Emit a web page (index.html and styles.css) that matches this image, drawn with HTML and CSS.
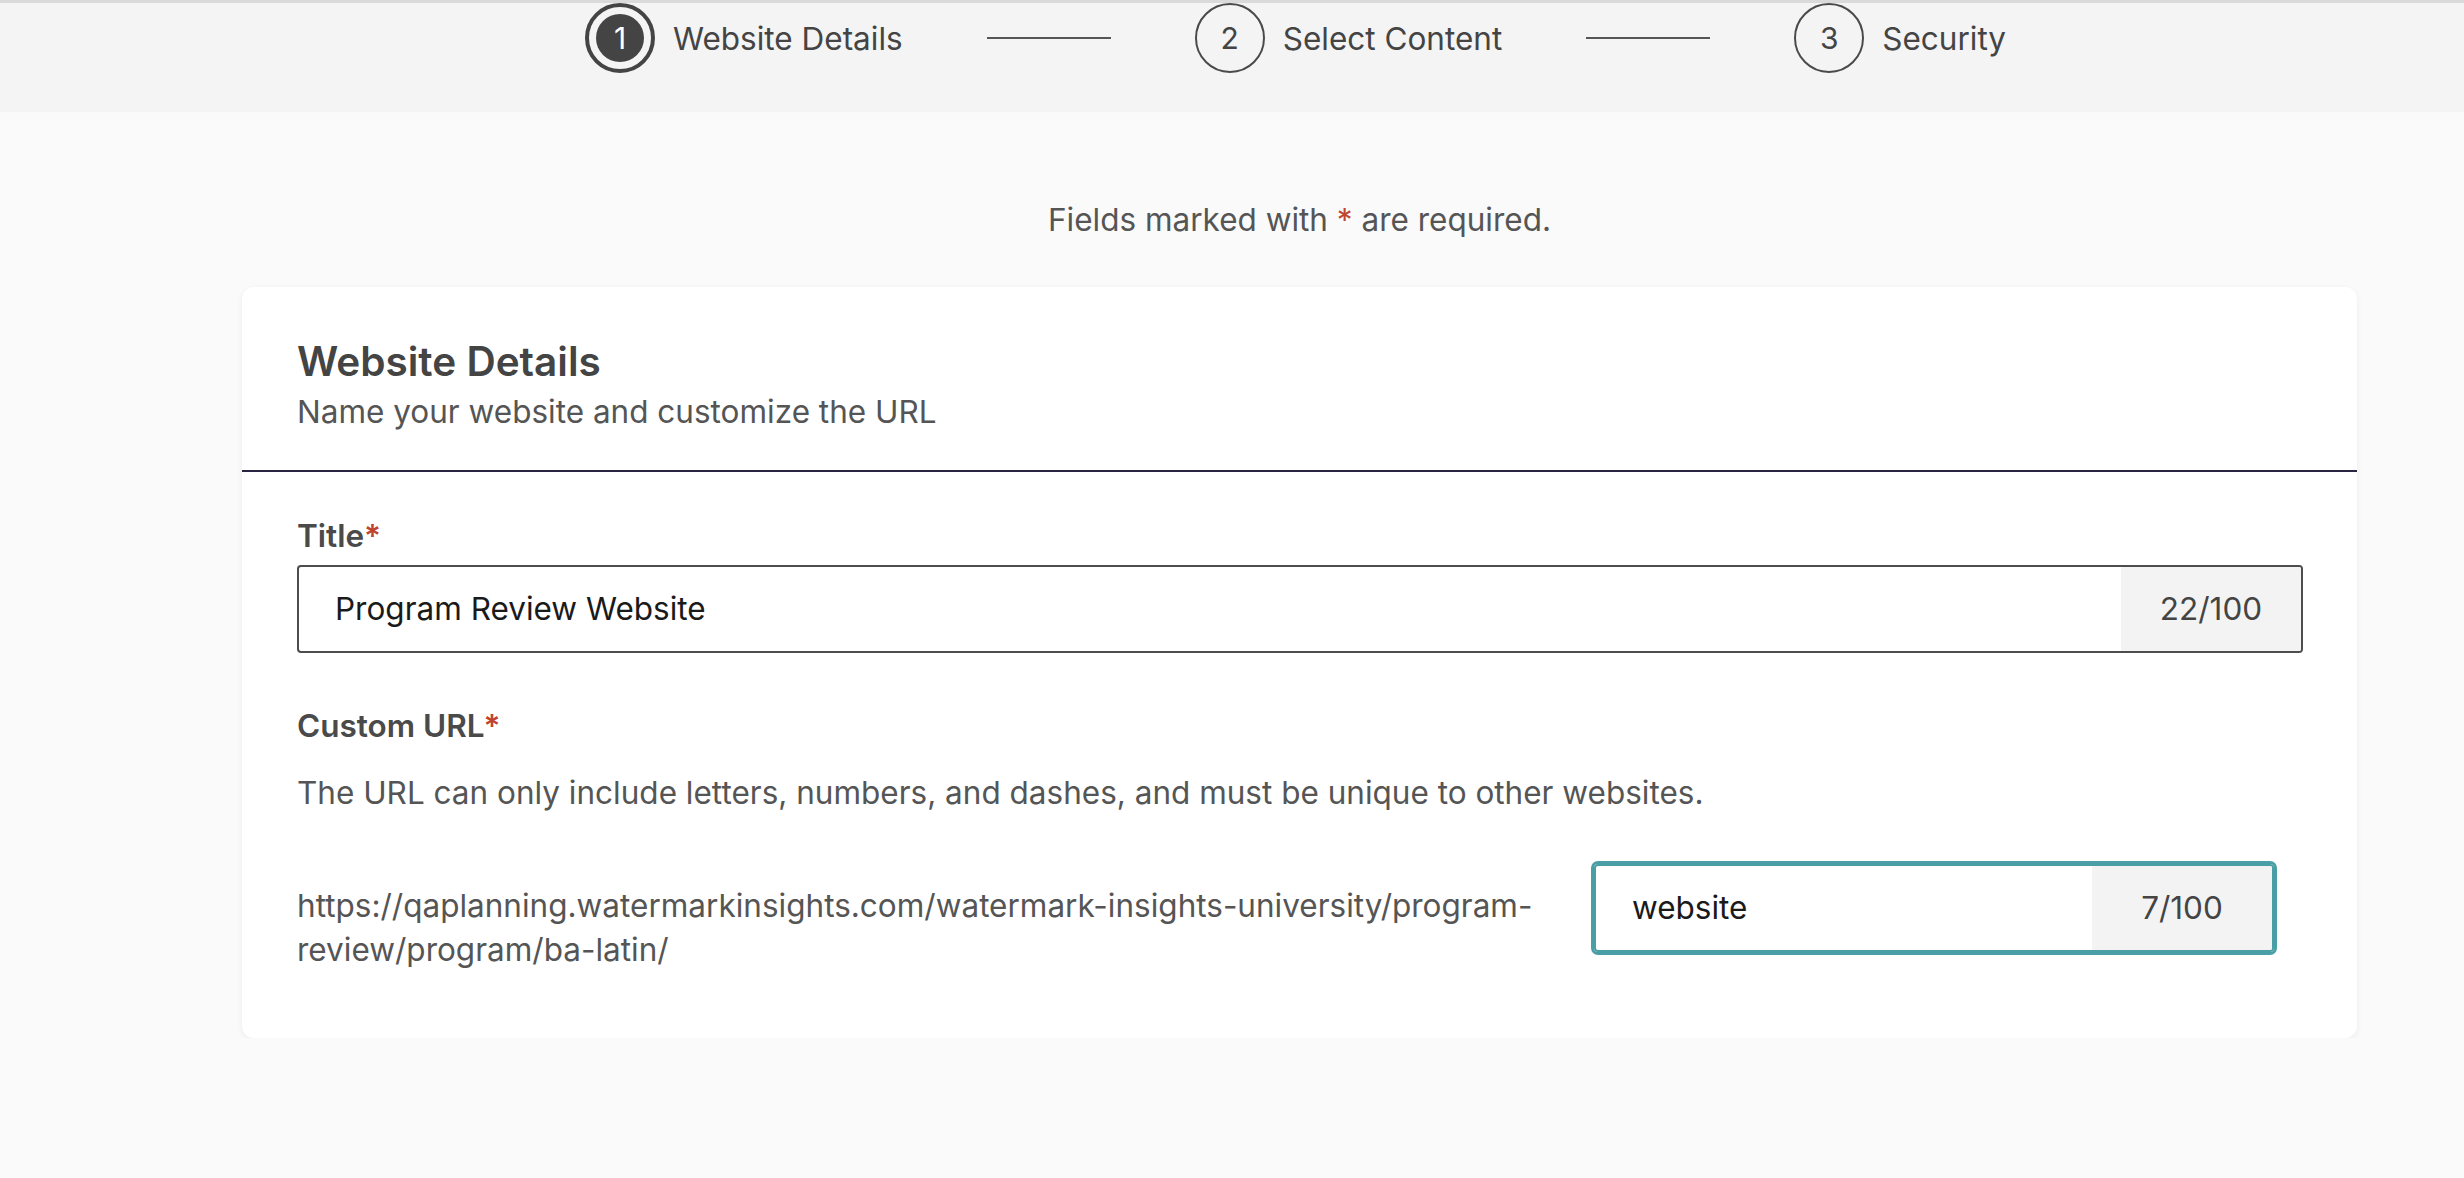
FILE: index.html
```html
<!DOCTYPE html>
<html lang="en">

<head>
    <meta charset="UTF-8">
    <meta name="viewport" content="width=device-width, initial-scale=1.0">

    <link rel="stylesheet" href="styles.css">

    <title>Website Details</title>
</head>

<body>
    <div class="topbar">
        <div class="steps">
            <div class="step">
                <div class="step_circle active">1</div>
                <span class="step_label">Website Details</span>
            </div>
            <div class="step_line"></div>
            <div class="step">
                <div class="step_circle">2</div>
                <span class="step_label">Select Content</span>
            </div>
            <div class="step_line"></div>
            <div class="step">
                <div class="step_circle">3</div>
                <span class="step_label">Security</span>
            </div>
        </div>
    </div>

    <div class="page">
        <p class="required_note">Fields marked with <span class="star">*</span> are required.</p>

        <div class="card">
            <div class="card_header">
                <h2>Website Details</h2>
                <p>Name your website and customize the URL</p>
            </div>
            <div class="card_body">
                <label class="label" for="title">Title<span class="star">*</span></label>
                <div class="field_box">
                    <input class="input" id="title" type="text" value="Program Review Website">
                    <span class="counter">22/100</span>
                </div>

                <div class="url_group">
                    <label class="label" for="url">Custom URL<span class="star">*</span></label>
                    <p class="help">The URL can only include letters, numbers, and dashes, and must be unique to other websites.</p>
                    <div class="url_row">
                        <div class="url_prefix">https://qaplanning.watermarkinsights.com/watermark-insights-university/program-review/program/ba-latin/</div>
                        <div class="field_box focused">
                            <input class="input" id="url" type="text" value="website">
                            <span class="counter">7/100</span>
                        </div>
                    </div>
                </div>
            </div>
        </div>
    </div>
</body>

</html>
```

FILE: styles.css
```css
body {
    margin: 0;
    background-color: #fafafa;
    font-family: Inter, "Noto Sans", sans-serif;
    font-size: 31.5px;
    color: #4a4a4a;
}

.topbar {
    height: 109px;
    background-color: #f4f4f4;
    border-top: 3px solid #dadada;
}

.steps {
    display: flex;
    justify-content: center;
    align-items: center;
    gap: 84px;
    padding-left: 127px;
}

.step {
    display: flex;
    align-items: center;
    gap: 18px;
}

.step_circle {
    width: 70px;
    height: 70px;
    box-sizing: border-box;
    border: 2px solid #4a4a4a;
    border-radius: 50%;
    display: flex;
    align-items: center;
    justify-content: center;
    font-size: 30px;
    color: #444;
}

.step_circle.active {
    border-width: 4px;
    border-color: #444;
    padding: 7px;
    background-color: #444;
    background-clip: content-box;
    color: #fff;
}

.step_label {
    color: #444;
}

.step_line {
    width: 124px;
    height: 2px;
    background-color: #555;
}

.page {
    padding: 0 107px 0 242px;
}

.required_note {
    margin: 87px 0 46px;
    text-align: center;
    line-height: 42px;
    color: #555;
}

.star {
    color: #c0432e;
}

.card {
    background-color: #fff;
    border-radius: 12px;
    box-shadow: 0 2px 6px rgba(0, 0, 0, 0.06);
}

.card_header {
    padding: 49px 55px 37px;
    border-bottom: 2px solid #2b2440;
}

.card_header h2 {
    margin: 0;
    font-size: 40.5px;
    font-weight: 600;
    line-height: 1.3;
    color: #444;
}

.card_header p {
    margin: 2px 0 0;
    line-height: 42px;
    color: #555;
}

.card_body {
    padding: 43px 54px 66px 55px;
}

.label {
    display: block;
    margin-bottom: 8px;
    font-weight: 600;
    line-height: 42px;
    color: #4a4a4a;
}

.field_box {
    display: flex;
    height: 88px;
    box-sizing: border-box;
    border: 2px solid #4d4d4d;
    border-radius: 4px;
    background-color: #fff;
    overflow: hidden;
}

.field_box.focused {
    border-color: #4a9ea6;
    outline: 3px solid #4a9ea6;
}

.input {
    flex: 1;
    min-width: 0;
    border: 0;
    padding: 0 36px;
    background: transparent;
    font-family: inherit;
    font-size: 31.5px;
    color: #1a1a1a;
    outline: none;
}

.counter {
    width: 180px;
    display: flex;
    align-items: center;
    justify-content: center;
    background-color: #f3f3f3;
    color: #444;
}

.url_group {
    margin-top: 52px;
}

.help {
    margin: 25px 0 0;
    line-height: 42px;
    color: #555;
}

.url_row {
    display: grid;
    grid-template-columns: 1fr 680px;
    gap: 40px;
    margin-top: 50px;
    padding-right: 29px;
}

.url_prefix {
    padding-top: 20px;
    line-height: 44px;
    color: #555;
}
```
